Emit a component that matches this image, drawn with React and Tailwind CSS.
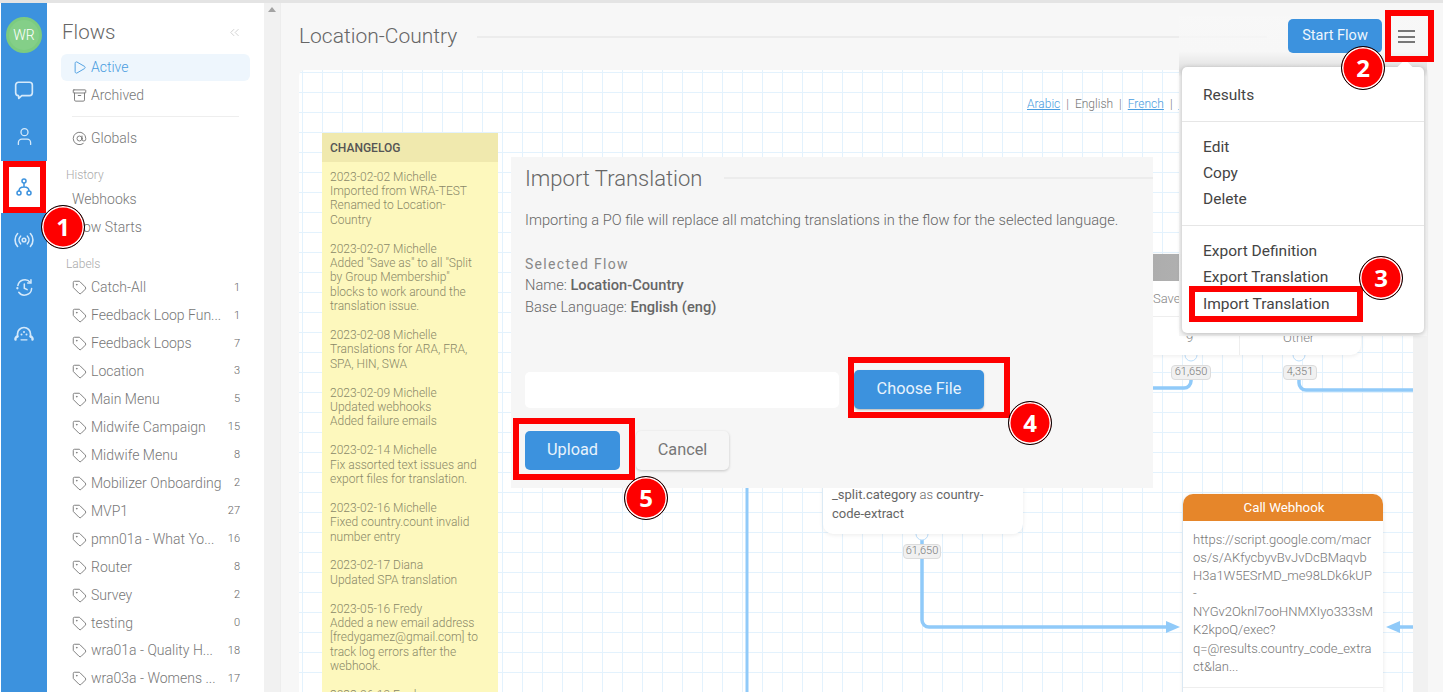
import { Play, Archive, AtSign, Tag, ChevronsLeft, User } from 'lucide-react'

const labels = [
  ['Catch-All', 1],
  ['Feedback Loop Fun...', 1],
  ['Feedback Loops', 7],
  ['Location', 3],
  ['Main Menu', 5],
  ['Midwife Campaign', 15],
  ['Midwife Menu', 8],
  ['Mobilizer Onboarding', 2],
  ['MVP1', 27],
  ['pmn01a - What Yo...', 16],
  ['Router', 8],
  ['Survey', 2],
  ['testing', 0],
  ['wra01a - Quality H...', 18],
  ['wra03a - Womens ...', 17],
]

const changelog = [
  '2023-02-02 Michelle\nImported from WRA-TEST\nRenamed to Location-\nCountry',
  '2023-02-07 Michelle\nAdded "Save as" to all "Split\nby Group Membership"\nblocks to work around the\ntranslation issue.',
  '2023-02-08 Michelle\nTranslations for ARA, FRA,\nSPA, HIN, SWA',
  '2023-02-09 Michelle\nUpdated webhooks\nAdded failure emails',
  '2023-02-14 Michelle\nFix assorted text issues and\nexport files for translation.',
  '2023-02-16 Michelle\nFixed country.count invalid\nnumber entry',
  '2023-02-17 Diana\nUpdated SPA translation',
  '2023-05-16 Fredy\nAdded a new email address\n[fredygamez@gmail.com] to\ntrack log errors after the\nwebhook.',
  '2023-06-19 Fredy',
]

const webhookLines = [
  'https://script.google.com/macr',
  'os/s/AKfycbyvBvJvDcBMaqvb',
  'H3a1W5ESrMD_me98LDk6kUP',
  '-',
  'NYGv2Oknl7ooHNMXIyo333sM',
  'K2kpoQ/exec?',
  'q=@results.country_code_extra',
  'ct&lan...',
]

function ChatIcon({ className }) {
  return (
    <svg className={className} viewBox="0 0 18 18" fill="none" stroke="currentColor" strokeWidth="1.5" strokeLinejoin="round">
      <path d="M4 2h10a2.5 2.5 0 0 1 2.5 2.5v7A2.5 2.5 0 0 1 14 14H7l-2.7 2.5L4 14a2.5 2.5 0 0 1-2.5-2.5v-7A2.5 2.5 0 0 1 4 2z" />
    </svg>
  )
}

function FlowIcon({ className }) {
  return (
    <svg className={className} viewBox="0 0 16 18" fill="none" stroke="currentColor" strokeWidth="1.5">
      <circle cx="8" cy="3" r="2" />
      <circle cx="3" cy="15" r="2" />
      <circle cx="13" cy="15" r="2" />
      <path d="M8 5v4M3 13c0-3 2-4 5-4s5 1 5 4" />
    </svg>
  )
}

function RadioIcon({ className }) {
  return (
    <svg className={className} viewBox="0 0 20 20" fill="none" stroke="currentColor" strokeWidth="1.6" strokeLinecap="round">
      <circle cx="10" cy="10" r="1.8" />
      <path d="M6.6 6.2a5.5 5.5 0 0 0 0 7.6M13.4 6.2a5.5 5.5 0 0 1 0 7.6" />
      <path d="M3.6 3.5a9.6 9.6 0 0 0 0 13M16.4 3.5a9.6 9.6 0 0 1 0 13" />
    </svg>
  )
}

function HistoryIcon({ className }) {
  return (
    <svg className={className} viewBox="0 0 20 20" fill="none" stroke="currentColor" strokeWidth="1.6" strokeLinecap="round">
      <path d="M3 8a7.5 7.5 0 0 1 13-3.5" />
      <path d="M17.5 11a7.5 7.5 0 0 1-13.5 4" />
      <path d="M16.8 1.8v3.4h-3.4" />
      <path d="M2.5 10.8h.01" strokeWidth="2.4" />
      <path d="M9.8 6.2v4.5l3 1.5" />
    </svg>
  )
}

function GaugeIcon({ className }) {
  return (
    <svg className={className} viewBox="0 0 20 20" fill="none" stroke="currentColor" strokeWidth="1.7" strokeLinecap="round">
      <path d="M3.5 12.5V10a6.5 6.5 0 0 1 13 0v2.5" />
      <path d="M1.5 15.5a2.5 2.5 0 0 1 2-3M18.5 15.5a2.5 2.5 0 0 0-2-3" strokeWidth="2.4" />
      <path d="M7 15.8h6" strokeWidth="1.2" />
      <path d="M7.5 10.5h.01M12.5 10.5h.01M10 8h.01" strokeWidth="2" />
    </svg>
  )
}

function Badge({ n, className }) {
  return (
    <div className={`absolute z-30 flex h-[44px] w-[44px] items-center justify-center rounded-full border border-black bg-[#fe0000] font-['Open_Sans',sans-serif] text-[24px] font-bold text-white shadow-[inset_0_0_0_1.5px_#fff] ${className}`}>
      {n}
    </div>
  )
}

function Pill({ children, className }) {
  return (
    <div className={`absolute z-[2] flex h-[15px] items-center justify-center rounded-[4px] border border-[#dcdcdc] bg-[#f1f1f1] text-[11px] text-[#777] ${className}`}>
      {children}
    </div>
  )
}

function SideLink({ icon: Icon, className, children }) {
  return (
    <div className={`flex items-center pl-[11px] ${className}`}>
      <Icon size={15} strokeWidth={1.5} className="mr-[4px] shrink-0" />
      <span>{children}</span>
    </div>
  )
}

function Nav() {
  const iconRow = 'flex h-[46px] items-center justify-center text-[#d5e9fa]'
  return (
    <div className="ml-px flex w-[46px] shrink-0 flex-col items-center bg-[#3c92de]">
      <div className="mt-[14px] flex h-[36px] w-[36px] items-center justify-center rounded-full border-[3px] border-[#7ccb80] bg-[#84cf88] text-[14px] text-white">
        WR
      </div>
      <div className="mb-[2px] mt-[14px] w-full">
        <div className={iconRow}><ChatIcon className="h-[20px] w-[20px]" /></div>
        <div className={iconRow}><User size={21} strokeWidth={1.5} /></div>
      </div>
      <div className="flex h-[52px] w-[46px] items-center justify-center bg-white text-[#3c92de]">
        <FlowIcon className="h-[18px] w-[16px]" />
      </div>
      <div className={`${iconRow} mt-[4px]`}><RadioIcon className="h-[20px] w-[20px]" /></div>
      <div className={`${iconRow} mt-px`}><HistoryIcon className="h-[19px] w-[19px]" /></div>
      <div className={`${iconRow} mt-px`}><GaugeIcon className="h-[20px] w-[20px]" /></div>
    </div>
  )
}

function Sidebar() {
  return (
    <div className="w-[217px] shrink-0 overflow-hidden bg-white px-[14px] text-[14px] text-[#777]">
      <div className="flex h-[44px] items-center justify-between pl-px pt-[14px] text-[#666]">
        <span className="text-[20.5px]">Flows</span>
        <ChevronsLeft size={15} strokeWidth={1.4} className="mr-[8px] text-[#ccc]" />
      </div>
      <SideLink icon={Play} className="mt-[7px] h-[27px] rounded-[6px] bg-[#eef6fd] text-[#4a9de0]">Active</SideLink>
      <SideLink icon={Archive} className="h-[29px]">Archived</SideLink>
      <div className="mx-[11px] mt-[6px] border-t border-[#eee]" />
      <SideLink icon={AtSign} className="mt-[7px] h-[28px]">Globals</SideLink>
      <div className="mt-[13px] h-[20px] pl-[5px] text-[12px] leading-[20px] text-[#aaa]">History</div>
      <div className="h-[28px] pl-[11px] leading-[28px]">Webhooks</div>
      <div className="h-[28px] pl-[11px] leading-[28px]">Flow Starts</div>
      <div className="mt-[13px] h-[20px] pl-[5px] text-[12px] leading-[20px] text-[#aaa]">Labels</div>
      {labels.map(([name, count]) => (
        <div key={name} className="flex h-[27.93px] items-center justify-between pr-[10px]">
          <SideLink icon={Tag} className="whitespace-nowrap">{name}</SideLink>
          <span className="text-[11px] text-[#666]">{count}</span>
        </div>
      ))}
    </div>
  )
}

function Canvas() {
  return (
    <div className="absolute left-[18px] top-[67px] h-[640px] w-[1114px] overflow-hidden rounded-tl-[6px] bg-white bg-[linear-gradient(#e3f2fd_1px,transparent_1px),linear-gradient(90deg,#e3f2fd_1px,transparent_1px)] bg-[size:20px_20px] bg-[position:3px_2px]">
      {/* language links */}
      <div className="absolute left-[728px] top-[27px] w-[152px] overflow-hidden whitespace-nowrap text-[12px] leading-[14px] text-[#777]">
        <span className="text-[#4a9de0] underline">Arabic</span>
        <span className="mx-[6px]">|</span>
        English
        <span className="mx-[6px]">|</span>
        <span className="text-[#4a9de0] underline">French</span>
        <span className="mx-[6px]">|</span>
        <span className="text-[#4a9de0] underline">Hindi</span>
      </div>

      {/* sticky note */}
      <div className="absolute left-[23px] top-[63px] w-[176px]">
        <div className="flex h-[29px] items-center bg-[#f0e9ae] pl-[8px] text-[12px] font-medium text-[#555]">CHANGELOG</div>
        <div className="h-[600px] bg-[#fdf8bd] px-[8px] pt-[7.5px] text-[12px] leading-[14.4px] text-[#8a8868]">
          {changelog.map((c) => (
            <p key={c} className="mb-[14.4px] whitespace-pre-line">{c}</p>
          ))}
        </div>
      </div>

      {/* connectors */}
      <svg className="absolute left-0 top-0 z-[1]" width="1114" height="640" fill="none" stroke="#90caf9" strokeWidth="3.5">
        <path d="M448 400V640" strokeWidth="3" />
        <path d="M623 470V550a7 7 0 0 0 7 7H870" />
        <path d="M892 295V311a7 7 0 0 1-7 7H800" />
        <path d="M1000 295V313a7 7 0 0 0 7 7H1114" />
        <path d="M1114 557H1096" />
        <path d="M867 551l14 6l-14 6z" fill="#90caf9" stroke="none" />
        <path d="M1101 551l-14 6l14 6z" fill="#90caf9" stroke="none" />
        <circle cx="623" cy="464" r="6" fill="#fff" stroke="#bbdefb" strokeWidth="1" />
        <circle cx="892" cy="285" r="6" fill="#fff" stroke="#bbdefb" strokeWidth="1" />
        <circle cx="1000" cy="285" r="6" fill="#fff" stroke="#bbdefb" strokeWidth="1" />
      </svg>

      {/* split node under the modal */}
      <div className="absolute left-[524px] top-[400px] z-[2] flex h-[64px] w-[200px] flex-col justify-end rounded-b-[10px] bg-white px-[9px] pb-[11px] text-[13px] leading-[18.5px] text-[#666] shadow-[0_1px_4px_rgba(0,0,0,0.08)]">
        <div className="whitespace-nowrap"><span className="font-normal">_split.category</span> as <span className="font-normal">country-</span></div>
        <div className="font-normal">code-extract</div>
      </div>
      <Pill className="left-[604px] top-[474px] w-[38px]">61,650</Pill>

      {/* node behind menu */}
      <div className="absolute left-[820px] top-[184px] z-[2] h-[101px] w-[242px] rounded-b-[10px] bg-white text-[13px] text-[#888] shadow-[0_1px_4px_rgba(0,0,0,0.08)]">
        <div className="h-[27px] bg-[linear-gradient(90deg,#aaa,#b5b5b5_50%,#999)]" />
        <div className="absolute left-[34px] top-[35px]">Save</div>
        <div className="absolute left-0 right-0 top-[62px] border-t border-[#eee]" />
        <div className="absolute left-[120px] top-[62px] h-[39px] border-l border-[#eee]" />
        <div className="absolute left-[67px] top-[74px]">9</div>
        <div className="absolute left-[164px] top-[74px]">Other</div>
      </div>
      <Pill className="left-[872px] top-[295px] w-[40px]">61,650</Pill>
      <Pill className="left-[984px] top-[295px] w-[34px]">4,351</Pill>

      {/* webhook node */}
      <div className="absolute left-[884px] top-[424px] z-[2] h-[230px] w-[200px] rounded-[10px] bg-white shadow-[0_1px_4px_rgba(0,0,0,0.1)]">
        <div className="h-[27px] rounded-t-[10px] bg-[#e6862a] pl-[2px] text-center text-[13.3px] font-normal leading-[27px] text-white">Call Webhook</div>
        <div className="border-b border-[#eee] px-[10px] pb-[11px] pt-[10px] text-[13px] leading-[18.1px] text-[#777]">
          {webhookLines.map((l) => (
            <div key={l} className="whitespace-nowrap">{l}</div>
          ))}
        </div>
      </div>
    </div>
  )
}

function ImportModal() {
  return (
    <div className="absolute left-[230px] top-[154px] z-10 h-[331px] w-[642px] bg-[#f6f6f6] pl-[14px] text-[14.65px] text-[#666]">
      <div className="flex h-[42px] items-center">
        <span className="whitespace-nowrap text-[22px] text-[#666]">Import Translation</span>
        <div className="ml-[22px] h-[2px] flex-1 bg-[#ececec]" />
      </div>
      <p className="mt-[12px] leading-[18px]">Importing a PO file will replace all matching translations in the flow for the selected language.</p>
      <div className="mt-[24px] text-[14px] font-normal leading-[22px] tracking-[1.3px] text-[#888]">Selected Flow</div>
      <div className="-mt-px leading-[22px]">Name: <span className="font-medium">Location-Country</span></div>
      <div className="leading-[22px]">Base Language: <span className="font-medium">English (eng)</span></div>
      <div className="mt-[52px] flex items-center">
        <div className="h-[36px] w-[314px] rounded-[5px] bg-white" />
        <div className="ml-[15px] flex h-[39px] w-[130px] items-center justify-center rounded-[5px] bg-[#3c92de] text-[16.3px] font-normal text-[#e8f3fc] shadow-[0_1px_2px_rgba(0,0,0,0.25)]">Choose File</div>
      </div>
      <div className="mt-[22px] flex">
        <div className="flex h-[39px] w-[95px] items-center justify-center rounded-[5px] bg-[#3c92de] text-[16.3px] font-normal text-[#e8f3fc]">Upload</div>
        <div className="ml-[16px] flex h-[39px] w-[93px] items-center justify-center rounded-[5px] bg-[#f6f6f6] text-[16.3px] font-normal text-[#777] shadow-[0_1px_3px_rgba(0,0,0,0.2)]">Cancel</div>
      </div>
    </div>
  )
}

function FlowMenu() {
  const item = 'px-[21px] text-[15.5px] font-normal leading-[26px] text-[#444]'
  return (
    <>
      {/* soft backdrop the menu drops over the canvas */}
      <div className="absolute left-[898px] top-[13px] z-[4] h-[320px] w-[248px] bg-[linear-gradient(rgba(248,248,248,0.75),rgba(247,247,247,0.8)_11%,rgba(222,222,222,0.95)_17%,rgba(246,246,246,0.98)_19%)]" />
      <div className="absolute left-[901px] top-[64px] z-20 w-[242px] rounded-[5px] bg-white pb-[16px] pt-[15px] shadow-[0_1px_5px_rgba(0,0,0,0.25)]">
        <div className="absolute right-[13px] top-[-5px] h-[12px] w-[12px] rotate-45 bg-white" />
        <div className={item}>Results</div>
        <div className="mb-[12px] mt-[13px] border-t border-[#e6e6e6]" />
        <div className={item}>Edit</div>
        <div className={item}>Copy</div>
        <div className={item}>Delete</div>
        <div className="mb-[12px] mt-[13px] border-t border-[#e6e6e6]" />
        <div className={item}>Export Definition</div>
        <div className={item}>Export Translation</div>
        <div className={`${item} mt-px`}>Import Translation</div>
      </div>
    </>
  )
}

export default function App() {
  return (
    <div className="relative flex h-[692px] w-[1443px] overflow-hidden border-t-[3px] border-t-[#e4e4e4] bg-white font-['Roboto',sans-serif] font-light">
      <Nav />
      <Sidebar />
      <div className="w-[16px] shrink-0 bg-[#f1f1f1]">
        <div className="ml-[4px] mt-[4px] h-0 w-0 border-x-[4px] border-b-[5px] border-x-transparent border-b-[#a3a3a3]" />
      </div>
      <div className="relative flex-1 overflow-hidden border-l border-l-[#ededed] bg-[#f7f7f7]">
        <div className="flex h-[68px] items-center pl-[18px]">
          <span className="whitespace-nowrap text-[21px] text-[#666]">Location-Country</span>
          <div className="ml-[20px] h-[2px] w-[790px] bg-[#ececec]" />
        </div>
        <Canvas />
        {/* scroll strip right of the canvas */}
        <div className="absolute bottom-0 left-[1132px] top-[67px] w-[15px] bg-[#f1f1f1]" />
        <FlowMenu />
        <div className="absolute left-[1007px] top-[16px] z-[5] flex h-[34px] w-[94px] items-center justify-center rounded-[5px] bg-[#3c92de] text-[14.5px] font-normal text-[#eef6fd]">Start Flow</div>
        <div className="absolute left-[1117px] top-[27px] z-[5] flex h-[13px] w-[17px] flex-col justify-between">
          <div className="h-[2px] bg-[#777]" />
          <div className="h-[2px] bg-[#777]" />
          <div className="h-[2px] bg-[#777]" />
        </div>
        <ImportModal />
      </div>

      {/* annotation boxes */}
      <div className="absolute left-[3px] top-[158px] z-30 h-[52px] w-[43px] border-[6px] border-[#fe0000]" />
      <div className="absolute left-[1385px] top-[7px] z-30 h-[52px] w-[49px] border-[6px] border-[#fe0000]" />
      <div className="absolute left-[1189px] top-[283px] z-30 h-[36px] w-[174px] border-[6px] border-[#fe0000]" />
      <div className="absolute left-[848px] top-[354px] z-30 h-[61px] w-[162px] border-[6px] border-[#fe0000]" />
      <div className="absolute left-[513px] top-[415px] z-30 h-[62px] w-[122px] border-[6px] border-[#fe0000]" />
      <Badge n="1" className="left-[41px] top-[202px]" />
      <Badge n="2" className="left-[1341px] top-[43px]" />
      <Badge n="3" className="left-[1359px] top-[253px]" />
      <Badge n="4" className="left-[1008px] top-[398px]" />
      <Badge n="5" className="left-[624px] top-[473px]" />
    </div>
  )
}
